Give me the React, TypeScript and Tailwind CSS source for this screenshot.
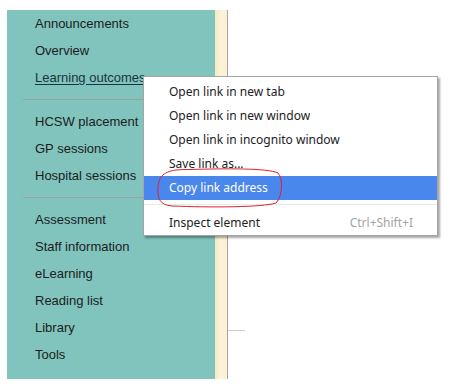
const groups = [
  ["Announcements", "Overview", "Learning outcomes"],
  ["HCSW placement", "GP sessions", "Hospital sessions"],
  ["Assessment", "Staff information", "eLearning", "Reading list", "Library", "Tools"],
]

const menuItems = [
  "Open link in new tab",
  "Open link in new window",
  "Open link in incognito window",
  "Save link as...",
]

function Sidebar() {
  return (
    <nav className="w-[208px] h-[369px] bg-[#80c4bd] text-[13px] text-[#1c1c1c] [font-family:'Liberation_Sans',Arial,sans-serif]">
      {groups.map((group, i) => (
        <div key={i}>
          {i > 0 && <div className="ml-[16px] my-[8px] h-px bg-[#9aa3a2]" />}
          <ul>
            {group.map((label) => (
              <li key={label} className="h-[27px] leading-[27px] pl-[28px]">
                {label === "Learning outcomes" ? (
                  <span className="underline underline-offset-2 text-[#1b3440]">{label}</span>
                ) : (
                  label
                )}
              </li>
            ))}
          </ul>
        </div>
      ))}
    </nav>
  )
}

function ContextMenu() {
  return (
    <div className="absolute left-[143px] top-[76px] w-[295px] bg-white border border-[#a5a5a5] shadow-[2px_2px_2px_rgba(0,0,0,0.35)] pt-[3px] text-[12px] text-[#222] [font-family:'Noto_Sans',sans-serif]">
      {menuItems.map((label) => (
        <div key={label} className="h-[24px] leading-[24px] pl-[25px]">
          {label}
        </div>
      ))}
      <div className="h-[24px] leading-[24px] pl-[25px] bg-[#4a87ec] text-white">Copy link address</div>
      <div className="mt-[4px] mb-[6px] h-px bg-[#e9e9e9]" />
      <div className="h-[24px] leading-[24px] pl-[25px] pr-[24px] flex justify-between">
        <span>Inspect element</span>
        <span className="text-[#a3a3a3]">Ctrl+Shift+I</span>
      </div>
    </div>
  )
}

export default function App() {
  return (
    <div className="relative w-[450px] h-[386px] bg-white overflow-hidden">
      <div className="flex pt-[10px] pl-[7px]">
        <Sidebar />
        <div className="w-[12px] h-[369px] bg-gradient-to-r from-[#f6e9c2] via-[#fcf3d9] to-[#fbf0d2]" />
        <div className="w-px h-[369px] bg-[#a9a2aa]" />
        <div className="pt-[320px]">
          <div className="w-[17px] h-px bg-[#cfcfcf]" />
        </div>
      </div>
      <ContextMenu />
      <svg className="absolute left-0 top-0 pointer-events-none" width="450" height="386">
        <path
          d="M 190 169.5 C 225 168.5 268 168 278 173 C 283 178 283 196 276 203 C 262 207.5 210 207.5 172 206 C 160 205 157.5 199 158 188 C 158.5 178 162 172 176 170 C 182 169.5 186 169.5 192 169.5"
          fill="none"
          stroke="#e0222a"
          strokeWidth="1"
        />
      </svg>
    </div>
  )
}
